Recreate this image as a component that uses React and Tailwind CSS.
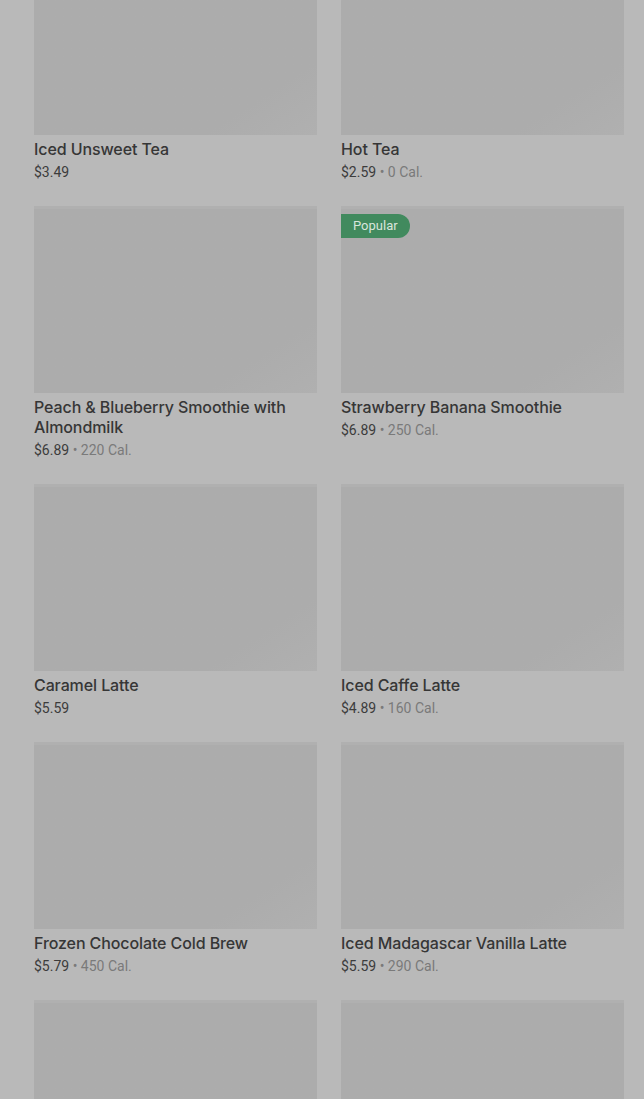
import React from 'react';

const items = [
  { name: 'Iced Unsweet Tea', price: '$3.49' },
  { name: 'Hot Tea', price: '$2.59', cal: '0 Cal.' },
  { name: 'Peach & Blueberry Smoothie with Almondmilk', price: '$6.89', cal: '220 Cal.' },
  { name: 'Strawberry Banana Smoothie', price: '$6.89', cal: '250 Cal.', popular: true },
  { name: 'Caramel Latte', price: '$5.59' },
  { name: 'Iced Caffe Latte', price: '$4.89', cal: '160 Cal.' },
  { name: 'Frozen Chocolate Cold Brew', price: '$5.79', cal: '450 Cal.' },
  { name: 'Iced Madagascar Vanilla Latte', price: '$5.59', cal: '290 Cal.' },
  { name: '', price: '' },
  { name: '', price: '' },
];

const Card = ({ item }) => (
  <div className="flex flex-col min-w-0">
    <div className="relative h-[187px] bg-gradient-to-br from-[#acacac] from-80% to-[#b0b0b0] border-t-[3px] border-[#b0b0b0]">
      {item.popular && (
        <span className="absolute top-[5px] left-0 h-6 pl-3 pr-3 flex items-center rounded-r-full bg-[#418a5e] text-[#d8e5dc] text-[13px]">
          Popular
        </span>
      )}
    </div>
    {item.name && (
      <>
        <div className="mt-1 text-[16px] leading-5 font-medium text-[#363636] font-['Inter',sans-serif] tracking-[-0.1px]">{item.name}</div>
        <div className="mt-[3px] text-[14px] leading-5 text-[#3c3c3c]">
          {item.price}
          {item.cal && (
            <span className="text-[#7a7a7a]"> • {item.cal}</span>
          )}
        </div>
      </>
    )}
  </div>
);

export default function App() {
  return (
    <div className="w-[644px] h-[1099px] overflow-hidden bg-[#b9b9b9] font-['Roboto',sans-serif]">
      <div className="pl-[34px] pr-[20px] mt-[-52px] grid grid-cols-2 gap-x-6 gap-y-6">
        {items.map((item, i) => (
          <Card key={i} item={item} />
        ))}
      </div>
    </div>
  );
}
